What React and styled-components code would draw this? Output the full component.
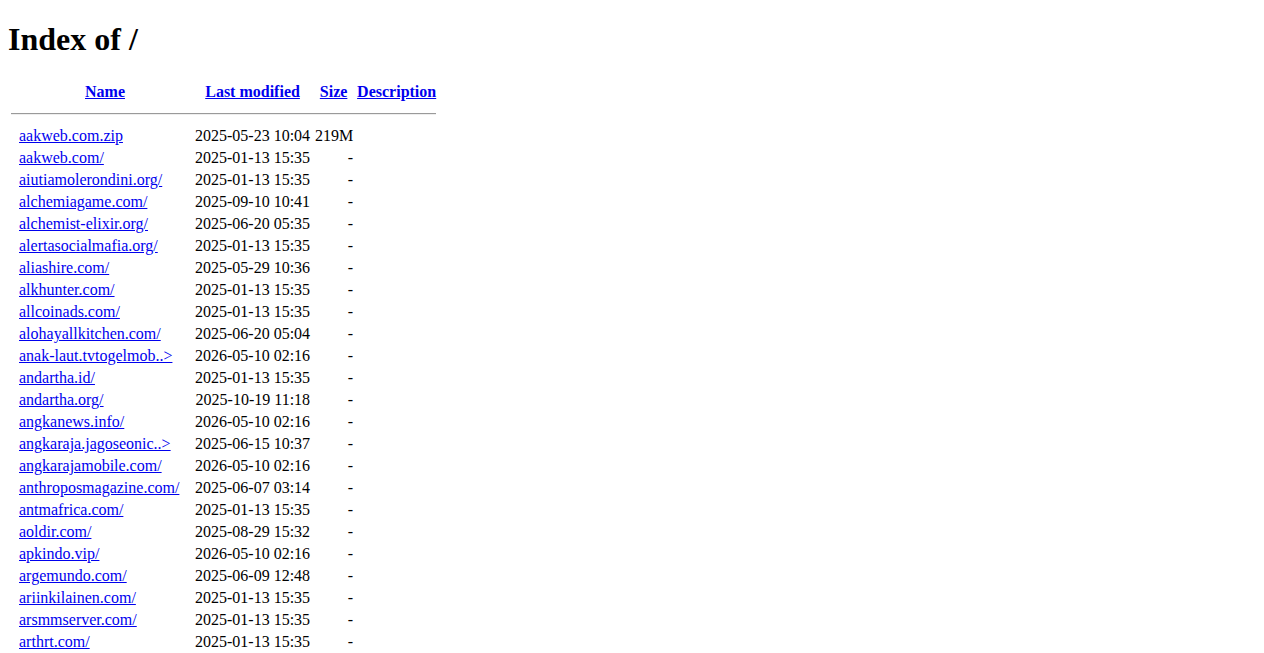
import React from 'react';
import styled, {createGlobalStyle} from 'styled-components';

/* page defaults, like a plain server index */
const GlobalStyle = createGlobalStyle`
  body {
    margin: 0 8px 8px;
    font-family: "Liberation Serif", "Times New Roman", serif;
    font-size: 16px;
    color: #000;
    background: #fff;
  }
`;

const Title = styled.h1`
  font-size: 2em;
  font-weight: bold;
  margin: 0.67em 0;
`;

const Listing = styled.table`
  border-collapse: separate;
  border-spacing: 2px;
  font-size: 16px;
`;

const HeadCell = styled.th`
  padding: 1px;
  font-weight: bold;
  text-align: center;
  vertical-align: middle;
`;

const Rule = styled.hr`
  margin: 8px 0;
  border: none;
  border-top: 1px solid #9a9a9a;
  border-bottom: 1px solid #eee;
  height: 0;
`;

const Cell = styled.td`
  padding: 1px;
  vertical-align: middle;
  text-align: ${props => props.$right ? 'right' : 'left'};
  width: ${props => props.$width || 'auto'};
  white-space: nowrap;
`;

const Link = styled.a`
  color: #0000ee;
  text-decoration: underline;
`;

const Footer = styled.address`
  font-style: italic;
`;

const visible = [
    ['aakweb.com.zip', '2025-05-23 10:04', '219M'],
    ['aakweb.com/', '2025-01-13 15:35'],
    ['aiutiamolerondini.org/', '2025-01-13 15:35'],
    ['alchemiagame.com/', '2025-09-10 10:41'],
    ['alchemist-elixir.org/', '2025-06-20 05:35'],
    ['alertasocialmafia.org/', '2025-01-13 15:35'],
    ['aliashire.com/', '2025-05-29 10:36'],
    ['alkhunter.com/', '2025-01-13 15:35'],
    ['allcoinads.com/', '2025-01-13 15:35'],
    ['alohayallkitchen.com/', '2025-06-20 05:04'],
    ['anak-laut.tvtogelmob..>', '2026-05-10 02:16'],
    ['andartha.id/', '2025-01-13 15:35'],
    ['andartha.org/', '2025-10-19 11:18'],
    ['angkanews.info/', '2026-05-10 02:16'],
    ['angkaraja.jagoseonic..>', '2025-06-15 10:37'],
    ['angkarajamobile.com/', '2026-05-10 02:16'],
    ['anthroposmagazine.com/', '2025-06-07 03:14'],
    ['antmafrica.com/', '2025-01-13 15:35'],
    ['aoldir.com/', '2025-08-29 15:32'],
    ['apkindo.vip/', '2026-05-10 02:16'],
    ['argemundo.com/', '2025-06-09 12:48'],
    ['ariinkilainen.com/', '2025-01-13 15:35'],
    ['arsmmserver.com/', '2025-01-13 15:35'],
    ['arthrt.com/', '2025-01-13 15:35'],
];

// the rest of the listing, below the fold
const syllables = ['ka', 'ro', 'li', 'na', 'te', 'mo', 'su', 'vi', 'da', 'ne', 'po', 'ri', 'ga', 'lo', 'me', 'zu'];
const tlds = ['.com/', '.org/', '.net/', '.id/', '.info/', '.vip/'];
const stamps = ['2025-01-13 15:35', '2026-05-10 02:16', '2025-06-20 05:04', '2025-08-29 15:32', '2025-03-14 09:12'];

function buildRest() {
    let seed = 7;
    const rnd = () => {
        seed = (seed * 1103515245 + 12345) % 2147483648;
        return seed / 2147483648;
    };
    const out = [];
    const letters = 'bcdefghijklmnoprstuvwy';
    for (let i = 0; i < 385; i++) {
        const first = letters[Math.floor(i / 385 * letters.length)];
        let word = first;
        const n = 2 + Math.floor(rnd() * 3);
        for (let k = 0; k < n; k++) word += syllables[Math.floor(rnd() * syllables.length)];
        out.push([word + tlds[Math.floor(rnd() * tlds.length)], stamps[Math.floor(rnd() * stamps.length)]]);
    }
    return out.sort((a, b) => a[0].localeCompare(b[0]));
}

const rows = [...visible, ...buildRest()];

function App() {
    return (
        <>
            <GlobalStyle/>
            <Title>Index of /</Title>
            <Listing>
                <tbody>
                <tr>
                    <HeadCell style={{width: 4}}/>
                    <HeadCell><Link href="?C=N;O=D">Name</Link></HeadCell>
                    <HeadCell><Link href="?C=M;O=A">Last modified</Link></HeadCell>
                    <HeadCell><Link href="?C=S;O=A">Size</Link></HeadCell>
                    <HeadCell><Link href="?C=D;O=A">Description</Link></HeadCell>
                </tr>
                <tr>
                    <HeadCell colSpan={5}><Rule/></HeadCell>
                </tr>
                {rows.map(([name, stamp, size]) => (
                    <tr key={name}>
                        <Cell $width="4px"/>
                        <Cell $width="172px"><Link href={name}>{name}</Link></Cell>
                        <Cell $right>{stamp}</Cell>
                        <Cell $right $width="39px">{size || '-'}</Cell>
                        <Cell>&nbsp;</Cell>
                    </tr>
                ))}
                <tr>
                    <HeadCell colSpan={5}><Rule/></HeadCell>
                </tr>
                </tbody>
            </Listing>
            <Footer>Apache Server at localhost Port 80</Footer>
        </>
    );
}

export default App;
